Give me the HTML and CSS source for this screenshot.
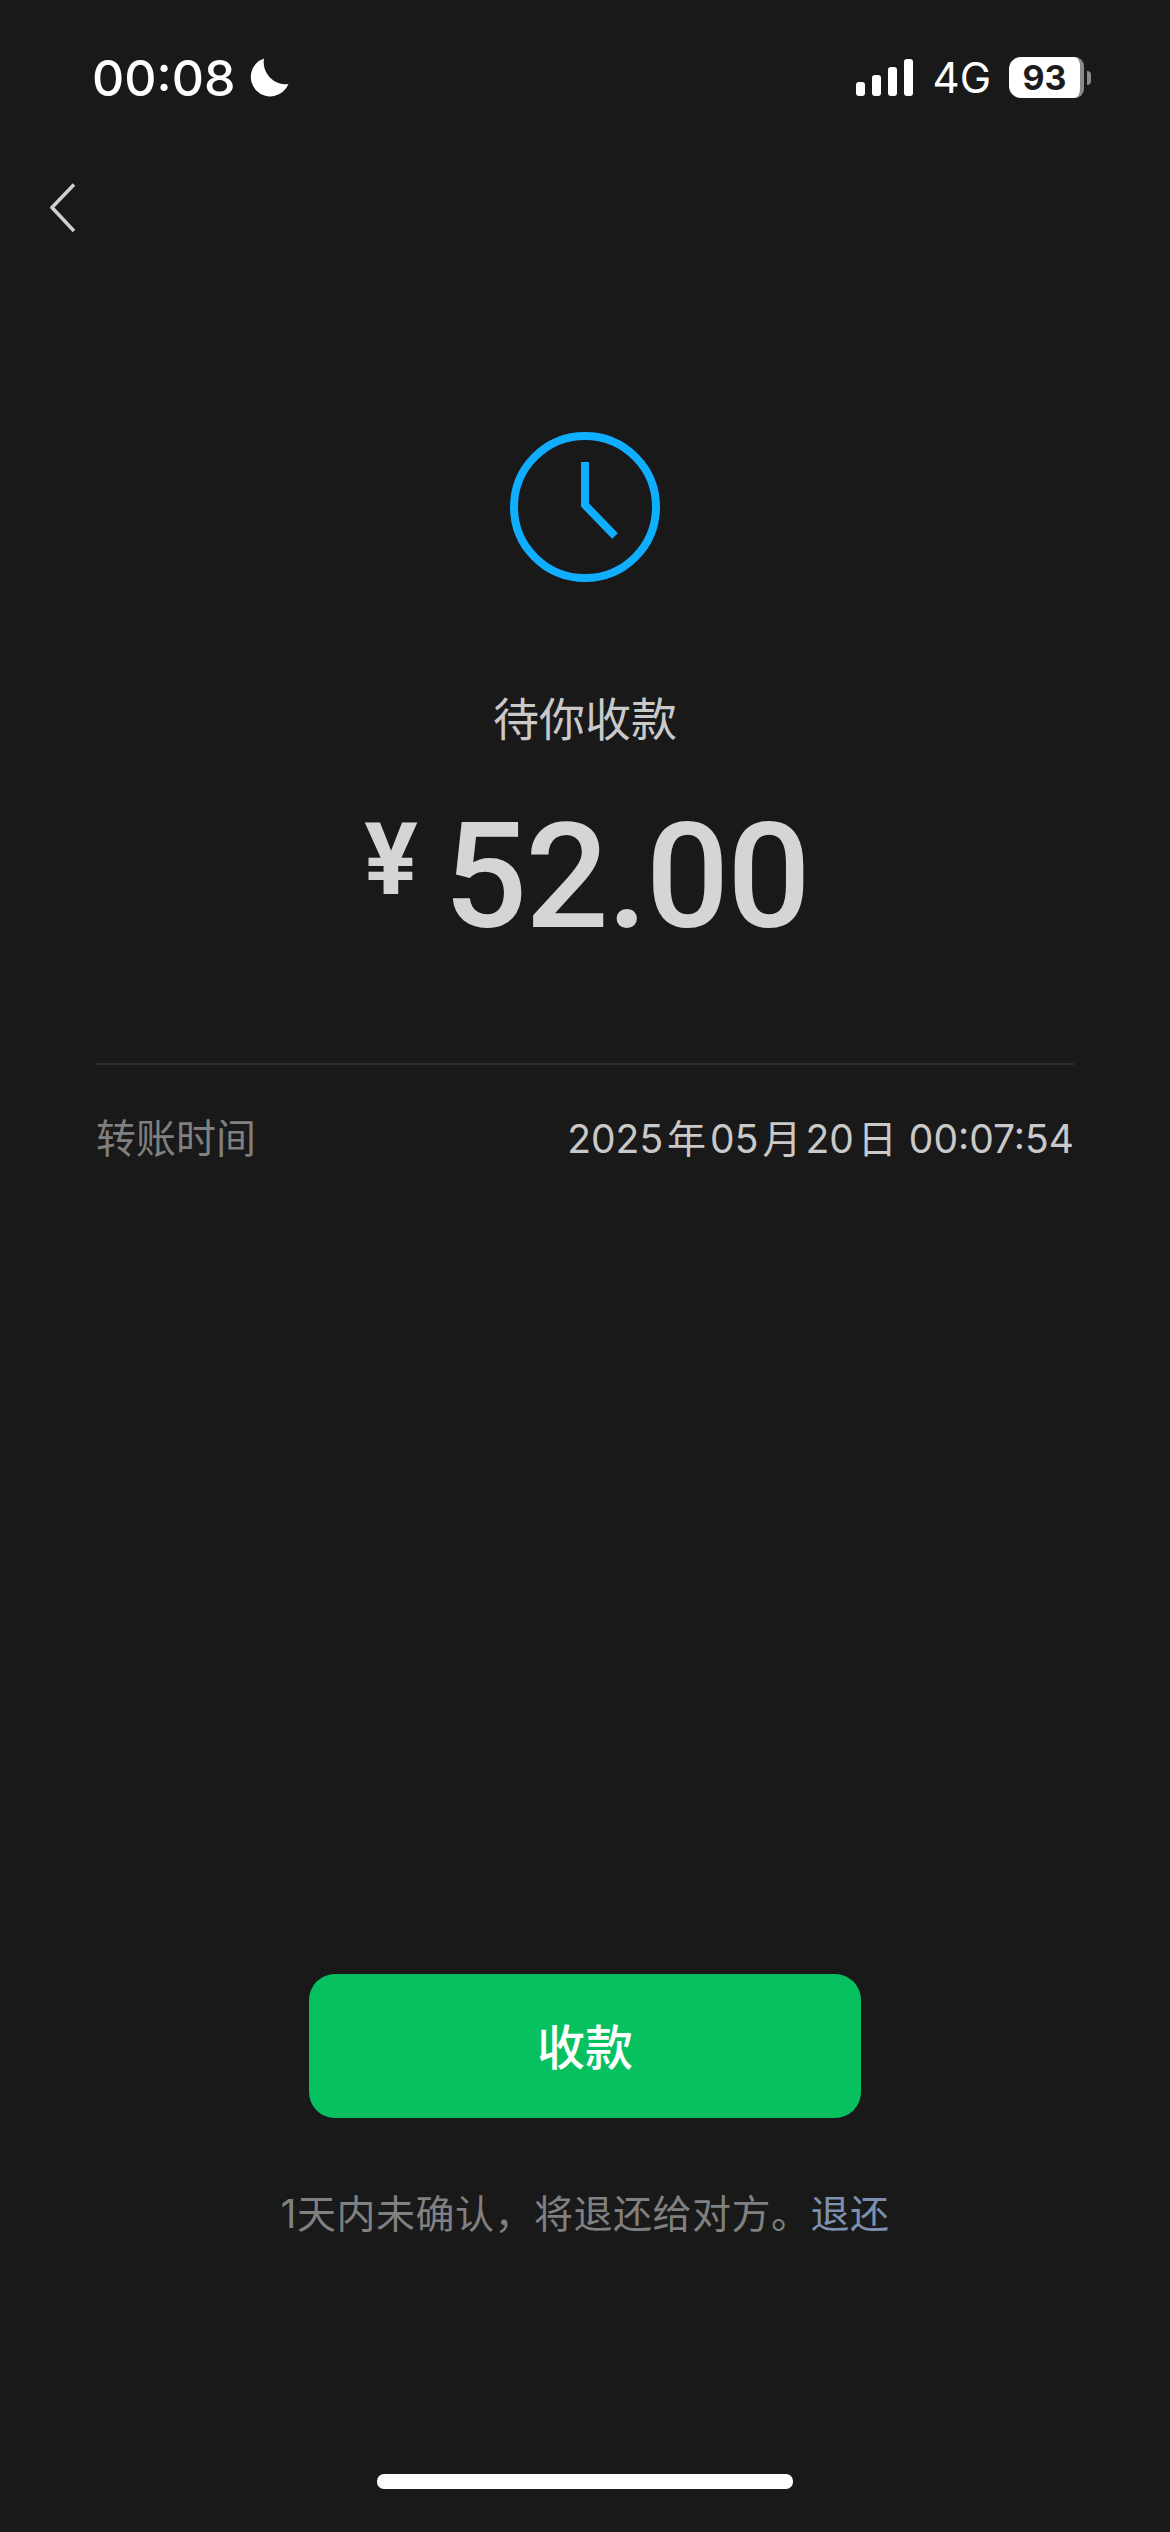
FILE: index.html
```html
<!DOCTYPE html>
<html>

<head>
    <meta http-equiv="Content-Type" content="text/html; charset=utf-8" />
    <meta name="viewport" content="width=device-width, initial-scale=1.0" />
    <title>待你收款</title>
    <link rel="stylesheet" href="styles.css">
</head>

<body>
    <div class="status">
        <div class="status-left">
            <span class="time">00:08</span>
            <svg class="moon" viewBox="0 0 40 40"><path d="M15 .5A19.5 19.5 0 1 0 39.5 26 A22 22 0 0 1 15 .5Z" /></svg>
        </div>
        <div class="status-right">
            <div class="signal"><i class="s1"></i><i class="s2"></i><i class="s3"></i><i class="s4"></i></div>
            <span class="net">4G</span>
            <div class="battery"><span class="level">93</span></div>
            <div class="nub"></div>
        </div>
    </div>

    <div class="nav">
        <svg class="back" viewBox="0 0 26 50"><path d="M24 1.5 2 24.5 24 48" /></svg>
    </div>

    <svg class="clock" viewBox="0 0 150 150">
        <circle cx="75" cy="75" r="71" />
        <path d="M75 30V73L105 104" />
    </svg>

    <p class="state">待你收款</p>
    <div class="amount"><span class="yen">¥</span><span class="num">52.00</span></div>

    <div class="row">
        <span class="label">转账时间</span>
        <span class="value">2025<i class="unit">年</i>05<i class="unit">月</i>20<i class="unit">日</i> 00:07:54</span>
    </div>

    <button class="btn">收款</button>
    <p class="note">1天内未确认&#xFF0C;将退还给对方。<a class="link">退还</a></p>

    <div class="home"></div>
</body>

</html>
```

FILE: styles.css
```css
* {
    margin: 0;
    padding: 0;
}

html,
body {
    height: 2532px;
    overflow: hidden;
}

body {
    width: 1170px;
    background-color: #191919;
    color: #c9c9c9;
    font-family: Inter, 'Noto Sans CJK SC', sans-serif;
    display: flex;
    flex-direction: column;
    align-items: center;
}

.status {
    width: 100%;
    height: 155px;
    box-sizing: border-box;
    padding: 0 79px 0 92px;
    display: flex;
    justify-content: space-between;
    align-items: center;
}

.status-left,
.status-right {
    display: flex;
    align-items: center;
}

.time {
    color: #fff;
    font-size: 50px;
    font-weight: 500;
    line-height: 60px;
}

.moon {
    width: 40px;
    height: 40px;
    margin-left: 14px;
    fill: #fff;
}

.signal {
    display: flex;
    align-items: flex-end;
    gap: 7px;
    height: 37px;
}

.signal i {
    display: block;
    width: 9px;
    border-radius: 3px;
    background-color: #fff;
}

.s1 {
    height: 14px;
}

.s2 {
    height: 21px;
}

.s3 {
    height: 29px;
}

.s4 {
    height: 37px;
}

.net {
    margin-left: 20px;
    color: #fff;
    font-size: 42px;
    line-height: 50px;
}

.battery {
    width: 71px;
    height: 41px;
    margin-left: 18px;
    border-radius: 12px 9px 9px 12px;
    border-right: 4px solid #8a8a8a;
    background-color: #fff;
    display: flex;
    justify-content: center;
    align-items: center;
}

.level {
    color: #1c1c1c;
    font-size: 34px;
    font-weight: 700;
    line-height: 41px;
}

.nub {
    width: 4px;
    height: 14px;
    margin-left: 3px;
    border-radius: 0 4px 4px 0;
    background-color: #8a8a8a;
}

.nav {
    width: 100%;
    box-sizing: border-box;
    padding: 28px 0 0 50px;
    height: 78px;
}

.back {
    display: block;
    width: 26px;
    height: 50px;
    fill: none;
    stroke: #cfcfcf;
    stroke-width: 3.5;
}

.clock {
    width: 150px;
    height: 150px;
    margin-top: 199px;
    flex-shrink: 0;
    fill: none;
    stroke: #10aeff;
    stroke-width: 8;
}

.state {
    margin-top: 107px;
    font-size: 46px;
    line-height: 60px;
    text-align: center;
}

.amount {
    margin-top: 53px;
    height: 150px;
    padding-left: 3px;
    display: flex;
    align-items: flex-start;
    color: #d5d5d5;
    font-family: Roboto, sans-serif;
}

.yen {
    font-size: 100px;
    font-weight: 700;
    line-height: 116px;
}

.num {
    margin-left: 26px;
    font-size: 147px;
    font-weight: 500;
    line-height: 150px;
    letter-spacing: -2px;
}

.row {
    width: 978px;
    margin-top: 111px;
    padding-top: 44px;
    border-top: 2px solid #2c2c2c;
    display: flex;
    justify-content: space-between;
    align-items: center;
    line-height: 60px;
}

.label {
    color: #808080;
    font-size: 40px;
}

.value {
    font-size: 39px;
    word-spacing: -3px;
}

.unit {
    font-style: normal;
    margin: 0 4px;
}

.btn {
    display: block;
    width: 552px;
    height: 144px;
    margin-top: 805px;
    padding-bottom: 4px;
    flex-shrink: 0;
    border: 0;
    border-radius: 26px;
    background-color: #07c160;
    color: #fff;
    font-family: inherit;
    font-size: 48px;
    font-weight: 500;
}

.note {
    margin-top: 66px;
    color: #808080;
    font-size: 39px;
    line-height: 60px;
    letter-spacing: 0.5px;
}

.link {
    color: #7d90b0;
}

.home {
    width: 416px;
    height: 15px;
    margin-top: 230px;
    flex-shrink: 0;
    border-radius: 7px;
    background-color: #fff;
}
```
